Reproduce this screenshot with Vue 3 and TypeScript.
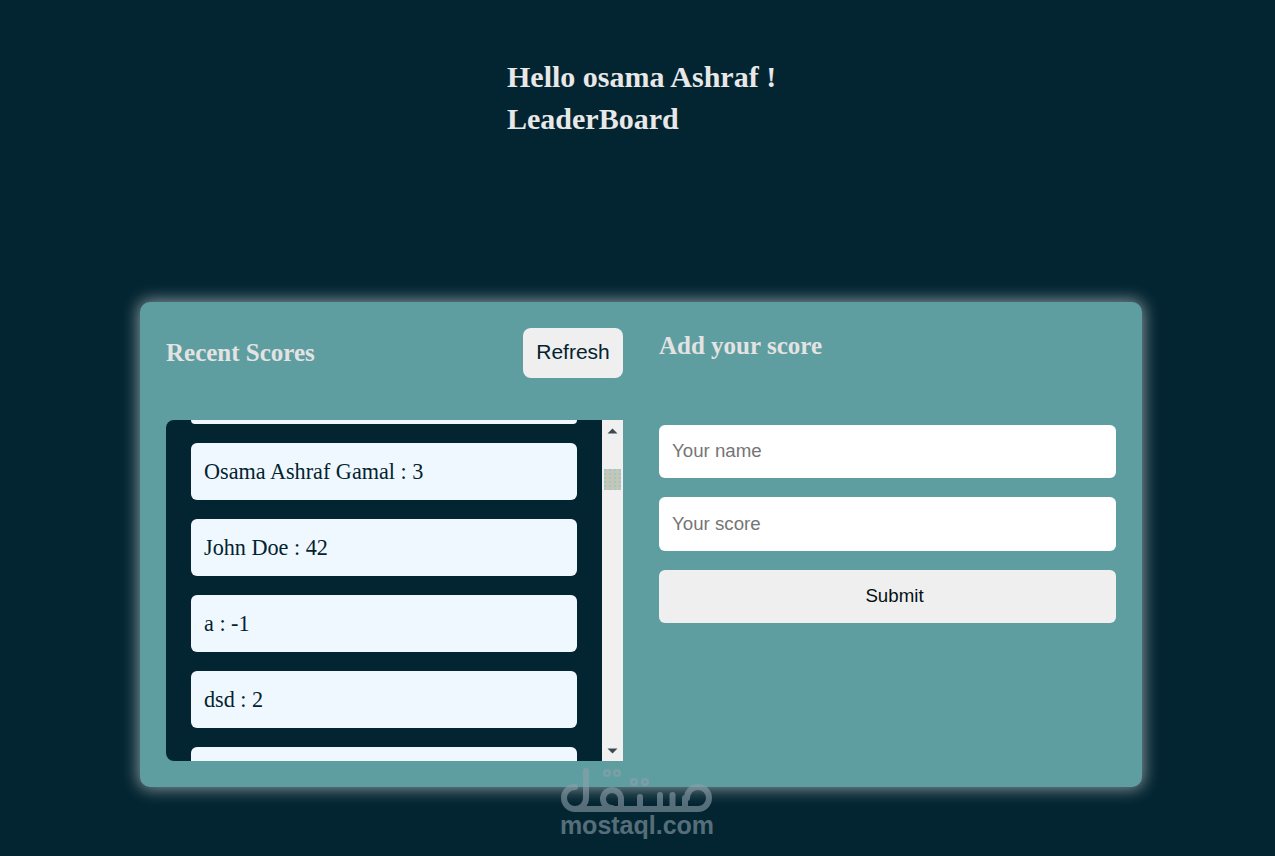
<script setup lang="ts">
const scores = [
  { name: 'Osama Ashraf Gamal', score: 3 },
  { name: 'John Doe', score: 42 },
  { name: 'a', score: -1 },
  { name: 'dsd', score: 2 },
]
</script>

<template>
  <main class="page">
    <header class="intro">
      <h1>Hello osama Ashraf !</h1>
      <h1>LeaderBoard</h1>
    </header>
    <section class="card">
      <div class="col">
        <div class="head">
          <h2>Recent Scores</h2>
          <button class="refresh" type="button">Refresh</button>
        </div>
        <div class="board">
          <ul class="list">
            <li class="item cut-top"></li>
            <li v-for="s in scores" :key="s.name" class="item">{{ s.name }} : {{ s.score }}</li>
            <li class="item cut-bottom"></li>
          </ul>
          <div class="bar">
            <svg class="arrow" width="11" height="6" viewBox="0 0 11 6"><path d="M5.5 0.5 L10.5 5.5 H0.5 Z" fill="#3d4a50" /></svg>
            <div class="track"><div class="thumb"></div></div>
            <svg class="arrow" width="11" height="6" viewBox="0 0 11 6"><path d="M0.5 0.5 H10.5 L5.5 5.5 Z" fill="#3d4a50" /></svg>
          </div>
        </div>
      </div>
      <div class="col right">
        <h2 class="add">Add your score</h2>
        <form class="form" @submit.prevent>
          <input class="first" type="text" placeholder="Your name" />
          <input type="text" placeholder="Your score" />
          <button class="submit" type="submit">Submit</button>
        </form>
      </div>
    </section>
    <div class="mark">
      <svg width="156" height="46" viewBox="0 0 156 46" fill="none" stroke="#8ca0aa" stroke-width="6" stroke-linecap="round" stroke-linejoin="round">
        <path d="M27 4 V31 A11 11 0 1 1 16 20" />
        <path d="M16 42 H139 A11 11 0 1 0 128 31" />
        <path d="M53 41 A9 9 0 1 1 62 32 V41" />
        <path d="M101 41 V28 M113.5 41 V28 M126 31 V41" />
        <g stroke-width="2.5"><circle cx="48" cy="6" r="2.8" /><circle cx="58" cy="6" r="2.8" /><circle cx="75" cy="15" r="2.8" /><circle cx="86" cy="15" r="2.8" /></g>
        <path d="M81 41 V30" />
      </svg>
      <span>mostaql.com</span>
    </div>
  </main>
</template>

<style scoped>
.page {
  position: relative;
  box-sizing: border-box;
  height: 856px;
  overflow: hidden;
  padding-top: 58px;
  background: #032531;
}
.intro {
  margin-left: 507px;
  height: 244px;
}
h1 {
  margin: 0;
  height: 42px;
  font: bold 30px/38px "Liberation Serif", serif;
  color: #e8e8e8;
}
.card {
  box-sizing: border-box;
  width: 1002px;
  height: 485px;
  margin-left: 140px;
  padding: 26px;
  display: grid;
  grid-template-columns: 457px 457px;
  gap: 36px;
  border-radius: 10px;
  background: #5f9ea0;
  box-shadow: 0 0 16px 2px rgba(240, 240, 240, 0.55);
}
.col {
  min-width: 0;
}
.head {
  display: flex;
  align-items: center;
  justify-content: space-between;
  height: 50px;
  margin-bottom: 42px;
}
h2 {
  margin: 0;
  font: bold 25px/28px "Liberation Serif", serif;
  color: #e3e3e3;
}
.refresh {
  width: 100px;
  height: 50px;
  padding: 0 0 2px;
  border: 0;
  border-radius: 8px;
  background: #efefef;
  color: #03232f;
  font: 21px "Liberation Sans", sans-serif;
}
.board {
  display: flex;
  height: 341px;
  overflow: hidden;
  border-radius: 8px 0 0 8px;
  background: #032531;
}
.list {
  flex: 1;
  margin: 0;
  padding: 0 25px;
  list-style: none;
  display: flex;
  flex-direction: column;
  gap: 19px;
}
.item {
  box-sizing: border-box;
  flex: none;
  height: 57px;
  padding-left: 13px;
  border-radius: 6px;
  background: #f0f8ff;
  color: #03232f;
  font: 22.2px/57px "Liberation Serif", serif;
}
.cut-top {
  height: 4px;
  border-radius: 0 0 6px 6px;
}
.cut-bottom {
  height: 14px;
  border-radius: 6px 6px 0 0;
}
.bar {
  flex: none;
  width: 21px;
  display: flex;
  flex-direction: column;
  align-items: center;
  padding: 8px 0 7px;
  box-sizing: border-box;
  background: #f0f0f0;
}
.track {
  flex: 1;
  align-self: stretch;
}
.thumb {
  width: 17px;
  height: 21px;
  margin: 35px auto 0;
  background-color: #c5c7b4;
  background-image: radial-gradient(circle at 1px 1px, #8fc4dc 0.6px, transparent 1px);
  background-size: 5px 4px;
}
.add {
  margin: 4px 0 0;
}
.form {
  display: flex;
  flex-direction: column;
  gap: 19.2px;
  margin-top: 65px;
}
input {
  box-sizing: border-box;
  height: 53.3px;
  padding: 0 13px;
  border: 0;
  border-radius: 6px;
  background: #fff;
  font: 18.7px "Liberation Sans", sans-serif;
}
input.first {
  padding-bottom: 2px;
}
input::placeholder {
  color: #757575;
}
.submit {
  height: 53.3px;
  padding: 0 0 2px 14px;
  border: 0;
  border-radius: 6px;
  background: #efefef;
  color: #030f14;
  font: 18.7px "Liberation Sans", sans-serif;
}
.mark {
  position: absolute;
  left: 559px;
  top: 767px;
  width: 156px;
  display: flex;
  flex-direction: column;
  align-items: center;
  opacity: 0.6;
}
.mark span {
  margin-top: -2px;
  font: bold 25px/28px "Liberation Sans", sans-serif;
  color: #8ca0aa;
}
</style>
